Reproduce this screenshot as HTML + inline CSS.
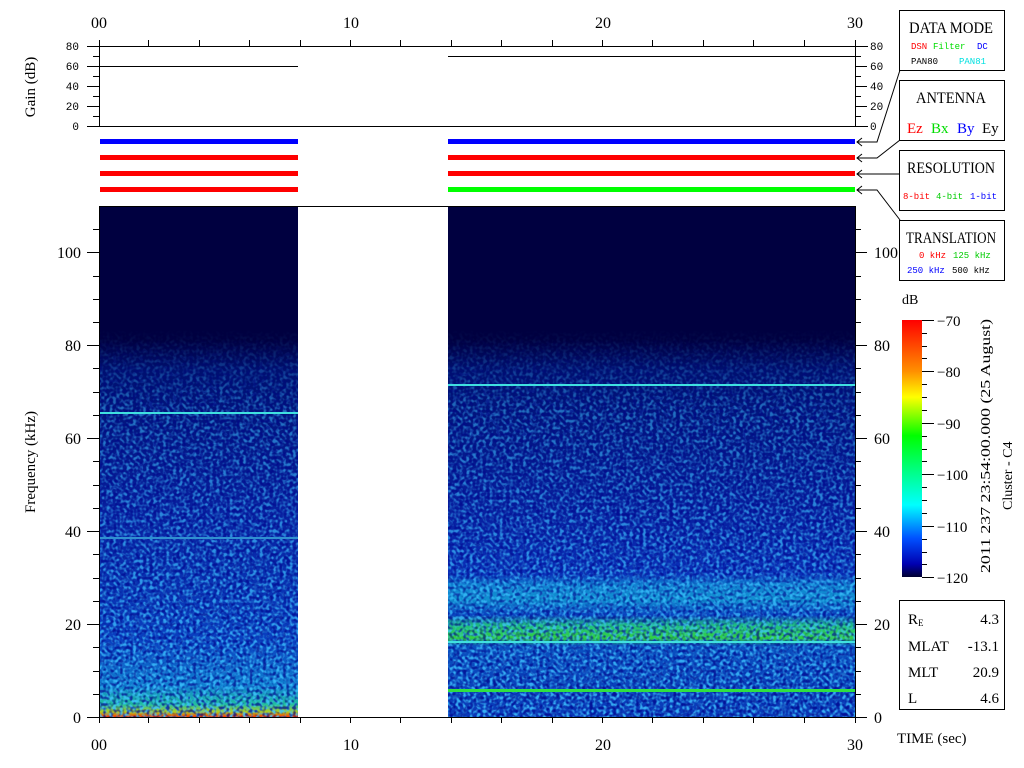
<!DOCTYPE html>
<html><head><meta charset="utf-8"><style>
html,body{margin:0;padding:0;background:#fff;width:1024px;height:768px;overflow:hidden}
svg text{font-family:"Liberation Serif",serif}
svg .m text{font-family:"Liberation Mono",monospace}
</style></head><body>
<svg width="1024" height="768" viewBox="0 0 1024 768" xmlns="http://www.w3.org/2000/svg">
<defs>
<linearGradient id="gL" x1="0" y1="0" x2="0" y2="1">
<stop offset="0" stop-color="#000040"/><stop offset="0.26" stop-color="#000040"/><stop offset="0.32" stop-color="#001070"/>
<stop offset="0.6" stop-color="#0820a0"/><stop offset="0.85" stop-color="#0a40c0"/><stop offset="0.94" stop-color="#1080d0"/>
<stop offset="0.975" stop-color="#20c0a0"/><stop offset="0.99" stop-color="#b0d020"/><stop offset="1" stop-color="#ff3000"/></linearGradient>
<linearGradient id="gR" x1="0" y1="0" x2="0" y2="1">
<stop offset="0" stop-color="#000040"/><stop offset="0.26" stop-color="#000040"/><stop offset="0.32" stop-color="#001070"/>
<stop offset="0.6" stop-color="#0820a0"/><stop offset="0.72" stop-color="#0a30b8"/><stop offset="0.74" stop-color="#1080d0"/>
<stop offset="0.77" stop-color="#1090d0"/><stop offset="0.8" stop-color="#0a40c0"/><stop offset="0.82" stop-color="#20c080"/>
<stop offset="0.845" stop-color="#30d040"/><stop offset="0.86" stop-color="#0a50c0"/><stop offset="1" stop-color="#0a38b8"/></linearGradient>
<linearGradient id="cb" x1="0" y1="0" x2="0" y2="1">
<stop offset="0" stop-color="#ff0000"/><stop offset="0.2" stop-color="#ff9000"/><stop offset="0.3" stop-color="#ffff00"/>
<stop offset="0.45" stop-color="#00ff00"/><stop offset="0.6" stop-color="#00ff90"/><stop offset="0.72" stop-color="#00ffff"/>
<stop offset="0.85" stop-color="#0050ff"/><stop offset="0.95" stop-color="#0000b0"/><stop offset="1" stop-color="#000030"/></linearGradient>
<linearGradient id="mk" x1="0" y1="0" x2="0" y2="1">
<stop offset="0" stop-color="#000"/><stop offset="0.24" stop-color="#000"/><stop offset="0.4" stop-color="#999"/><stop offset="1" stop-color="#fff"/></linearGradient>
<mask id="mm"><rect x="0" y="207" width="1024" height="510" fill="url(#mk)"/></mask>
<filter id="nz" x="0" y="0" width="1" height="1">
<feTurbulence type="fractalNoise" baseFrequency="0.3" numOctaves="1" seed="3"/>
<feColorMatrix type="matrix" values="0 0 0 0 0.05  0 0 0 0 0.55  0 0 0 0 1  4 0 0 0 -1.7"/>
</filter>
<filter id="nz2" x="0" y="0" width="1" height="1">
<feTurbulence type="fractalNoise" baseFrequency="0.3" numOctaves="1" seed="11"/>
<feColorMatrix type="matrix" values="0 0 0 0 0  0 0 0 0 0  0 0 0 0 0.25  4 0 0 0 -1.8"/>
</filter>
</defs>
<rect x="100" y="207" width="198" height="510" fill="url(#gL)"/>
<rect x="448" y="207" width="407" height="510" fill="url(#gR)"/>
<g mask="url(#mm)">
<rect x="100" y="207" width="198" height="510" filter="url(#nz)" opacity="0.85"/>
<rect x="448" y="207" width="407" height="510" filter="url(#nz)" opacity="0.85"/>
<rect x="100" y="207" width="198" height="510" filter="url(#nz2)" opacity="0.7"/>
<rect x="448" y="207" width="407" height="510" filter="url(#nz2)" opacity="0.7"/>
</g>
<rect x="100" y="412" width="198" height="2" fill="#40e0e0"/>
<rect x="100" y="537" width="198" height="2" fill="#3090d0"/>
<rect x="448" y="384" width="407" height="2" fill="#40e0e0"/>
<rect x="448" y="641" width="407" height="2" fill="#40e0e0"/>
<rect x="448" y="689" width="407" height="3" fill="#30e040"/>
<g stroke="#000" stroke-width="1" fill="none">
<line x1="99.5" y1="40" x2="99.5" y2="127"/>
<line x1="855.5" y1="40" x2="855.5" y2="127"/>
<line x1="87" y1="46.5" x2="868" y2="46.5"/>
<line x1="87" y1="126.5" x2="868" y2="126.5"/>
<line x1="99.5" y1="206" x2="99.5" y2="718"/>
<line x1="855.5" y1="206" x2="855.5" y2="718"/>
<line x1="99" y1="206.5" x2="856" y2="206.5"/>
<line x1="99" y1="717.5" x2="856" y2="717.5"/>
<line x1="100" y1="66.5" x2="298" y2="66.5"/>
<line x1="448" y1="56.5" x2="855" y2="56.5"/>
</g>
<g stroke="#000">
<path d="M148.5 40v6M199.5 40v6M249.5 40v6M300.5 40v6M350.5 40v6M400.5 40v6M451.5 40v6M501.5 40v6M552.5 40v6M602.5 40v6M652.5 40v6M703.5 40v6M753.5 40v6M804.5 40v6
M148.5 717v6M199.5 717v6M249.5 717v6M300.5 717v6M350.5 717v6M400.5 717v6M451.5 717v6M501.5 717v6M552.5 717v6M602.5 717v6M652.5 717v6M703.5 717v6M753.5 717v6M804.5 717v6M99.5 717v6M855.5 717v6"/>
<path d="M87 66.5h12M87 86.5h12M87 106.5h12M93 56.5h6M93 76.5h6M93 96.5h6M93 116.5h6
M855 66.5h12M855 86.5h12M855 106.5h12M855 56.5h6M855 76.5h6M855 96.5h6M855 116.5h6"/>
<path d="M87 717.5h12M87 624.5h12M87 531.5h12M87 438.5h12M87 345.5h12M87 252.5h12
M93 694.5h6M93 671.5h6M93 647.5h6M93 601.5h6M93 578.5h6M93 554.5h6M93 508.5h6M93 485.5h6M93 461.5h6M93 415.5h6M93 392.5h6M93 368.5h6M93 322.5h6M93 299.5h6M93 276.5h6M93 229.5h6
M855 717.5h12M855 624.5h12M855 531.5h12M855 438.5h12M855 345.5h12M855 252.5h12
M855 694.5h6M855 671.5h6M855 647.5h6M855 601.5h6M855 578.5h6M855 554.5h6M855 508.5h6M855 485.5h6M855 461.5h6M855 415.5h6M855 392.5h6M855 368.5h6M855 322.5h6M855 299.5h6M855 276.5h6M855 229.5h6"/>
</g>
<g>
<rect x="100" y="139" width="198" height="5" fill="#0000ff"/><rect x="448" y="139" width="407" height="5" fill="#0000ff"/>
<rect x="100" y="155" width="198" height="5" fill="#ff0000"/><rect x="448" y="155" width="407" height="5" fill="#ff0000"/>
<rect x="100" y="171" width="198" height="5" fill="#ff0000"/><rect x="448" y="171" width="407" height="5" fill="#ff0000"/>
<rect x="100" y="187" width="198" height="5" fill="#ff0000"/><rect x="448" y="187" width="407" height="5" fill="#00ff00"/>
</g>
<g font-size="16" text-anchor="middle">
<text x="99" y="28">00</text><text x="351" y="28">10</text><text x="603" y="28">20</text><text x="855" y="28">30</text>
<text x="99" y="750">00</text><text x="351" y="750">10</text><text x="603" y="750">20</text><text x="855" y="750">30</text>
</g>
<g class="m" font-size="11" text-anchor="end">
<text x="79" y="50">80</text><text x="79" y="70">60</text><text x="79" y="90">40</text><text x="79" y="110">20</text><text x="79" y="130">0</text>
</g>
<g class="m" font-size="11">
<text x="870" y="50">80</text><text x="870" y="70">60</text><text x="870" y="90">40</text><text x="870" y="110">20</text><text x="870" y="130">0</text>
</g>
<text transform="translate(35,87) rotate(-90)" font-size="15" text-anchor="middle">Gain (dB)</text>
<text transform="translate(35,462) rotate(-90)" font-size="15" text-anchor="middle">Frequency (kHz)</text>
<g font-size="16" text-anchor="end">
<text x="81" y="723">0</text><text x="81" y="630">20</text><text x="81" y="537">40</text><text x="81" y="444">60</text><text x="81" y="351">80</text><text x="81" y="258">100</text>
</g>
<g font-size="16">
<text x="874" y="723">0</text><text x="874" y="630">20</text><text x="874" y="537">40</text><text x="874" y="444">60</text><text x="874" y="351">80</text><text x="874" y="258">100</text>
</g>
<g stroke="#000" fill="none">
<path d="M900 70L877 142H857M862 138L857 142L862 146"/>
<path d="M900 140L877 158H857M862 154L857 158L862 162"/>
<path d="M900 174H857M862 170L857 174L862 178"/>
<path d="M900 220L877 190H857M862 186L857 190L862 194"/>
</g>
<g stroke="#000" fill="#fff">
<rect x="899.5" y="10.5" width="105" height="60"/>
<rect x="899.5" y="80.5" width="105" height="60"/>
<rect x="899.5" y="150.5" width="105" height="60"/>
<rect x="899.5" y="220.5" width="105" height="60"/>
<rect x="899.5" y="600.5" width="105" height="109"/>
</g>
<g font-size="16" text-anchor="middle">
<text x="951" y="33" textLength="84" lengthAdjust="spacingAndGlyphs">DATA MODE</text>
<text x="951" y="103" textLength="70" lengthAdjust="spacingAndGlyphs">ANTENNA</text>
<text x="951" y="173" textLength="88" lengthAdjust="spacingAndGlyphs">RESOLUTION</text>
<text x="951" y="243" textLength="90" lengthAdjust="spacingAndGlyphs">TRANSLATION</text>
</g>
<g class="m" font-size="9">
<text x="911" y="49" fill="#ff0000">DSN</text><text x="933" y="49" fill="#00dd00">Filter</text><text x="977" y="49" fill="#0000ff">DC</text>
<text x="911" y="64" fill="#000">PAN80</text><text x="959" y="64" fill="#00e0e0">PAN81</text>
<text x="903" y="199" fill="#ff0000">8-bit</text><text x="936" y="199" fill="#00cc00">4-bit</text><text x="970" y="199" fill="#0000ff">1-bit</text>
<text x="919" y="258" fill="#ff0000">0 kHz</text><text x="953" y="258" fill="#00cc00">125 kHz</text>
<text x="907" y="273" fill="#0000ff">250 kHz</text><text x="952" y="273" fill="#000">500 kHz</text>
</g>
<g font-size="15">
<text x="907" y="133" fill="#ff0000">Ez</text><text x="931" y="133" fill="#00dd00">Bx</text><text x="957" y="133" fill="#0000ff">By</text><text x="982" y="133" fill="#000">Ey</text>
</g>
<text x="902" y="304" font-size="14">dB</text>
<rect x="902" y="320" width="20" height="257" fill="url(#cb)"/>
<g stroke="#000"><path d="M922 320.5h12M922 577.5h12M922 371.5h12M922 423.5h12M922 474.5h12M922 526.5h12
M922 333.5h5M922 346.5h5M922 358.5h5M922 384.5h5M922 397.5h5M922 410.5h5M922 436.5h5M922 449.5h5M922 461.5h5M922 487.5h5M922 500.5h5M922 513.5h5M922 539.5h5M922 552.5h5M922 564.5h5"/></g>
<g font-size="15">
<text x="937" y="326">−70</text><text x="937" y="377">−80</text><text x="937" y="429">−90</text><text x="937" y="480">−100</text><text x="937" y="532">−110</text><text x="937" y="583">−120</text>
</g>
<text transform="translate(990,573) rotate(-90)" font-size="14" textLength="254" lengthAdjust="spacingAndGlyphs">2011 237 23:54:00.000 (25 August)</text>
<text transform="translate(1012,510) rotate(-90)" font-size="14">Cluster - C4</text>
<g font-size="15">
<text x="908" y="624">R<tspan font-size="9" dy="2">E</tspan></text><text x="999" y="624" text-anchor="end">4.3</text>
<text x="908" y="651">MLAT</text><text x="999" y="651" text-anchor="end">-13.1</text>
<text x="908" y="677">MLT</text><text x="999" y="677" text-anchor="end">20.9</text>
<text x="908" y="703">L</text><text x="999" y="703" text-anchor="end">4.6</text>
<text x="897" y="743">TIME (sec)</text>
</g>
</svg>
</body></html>
